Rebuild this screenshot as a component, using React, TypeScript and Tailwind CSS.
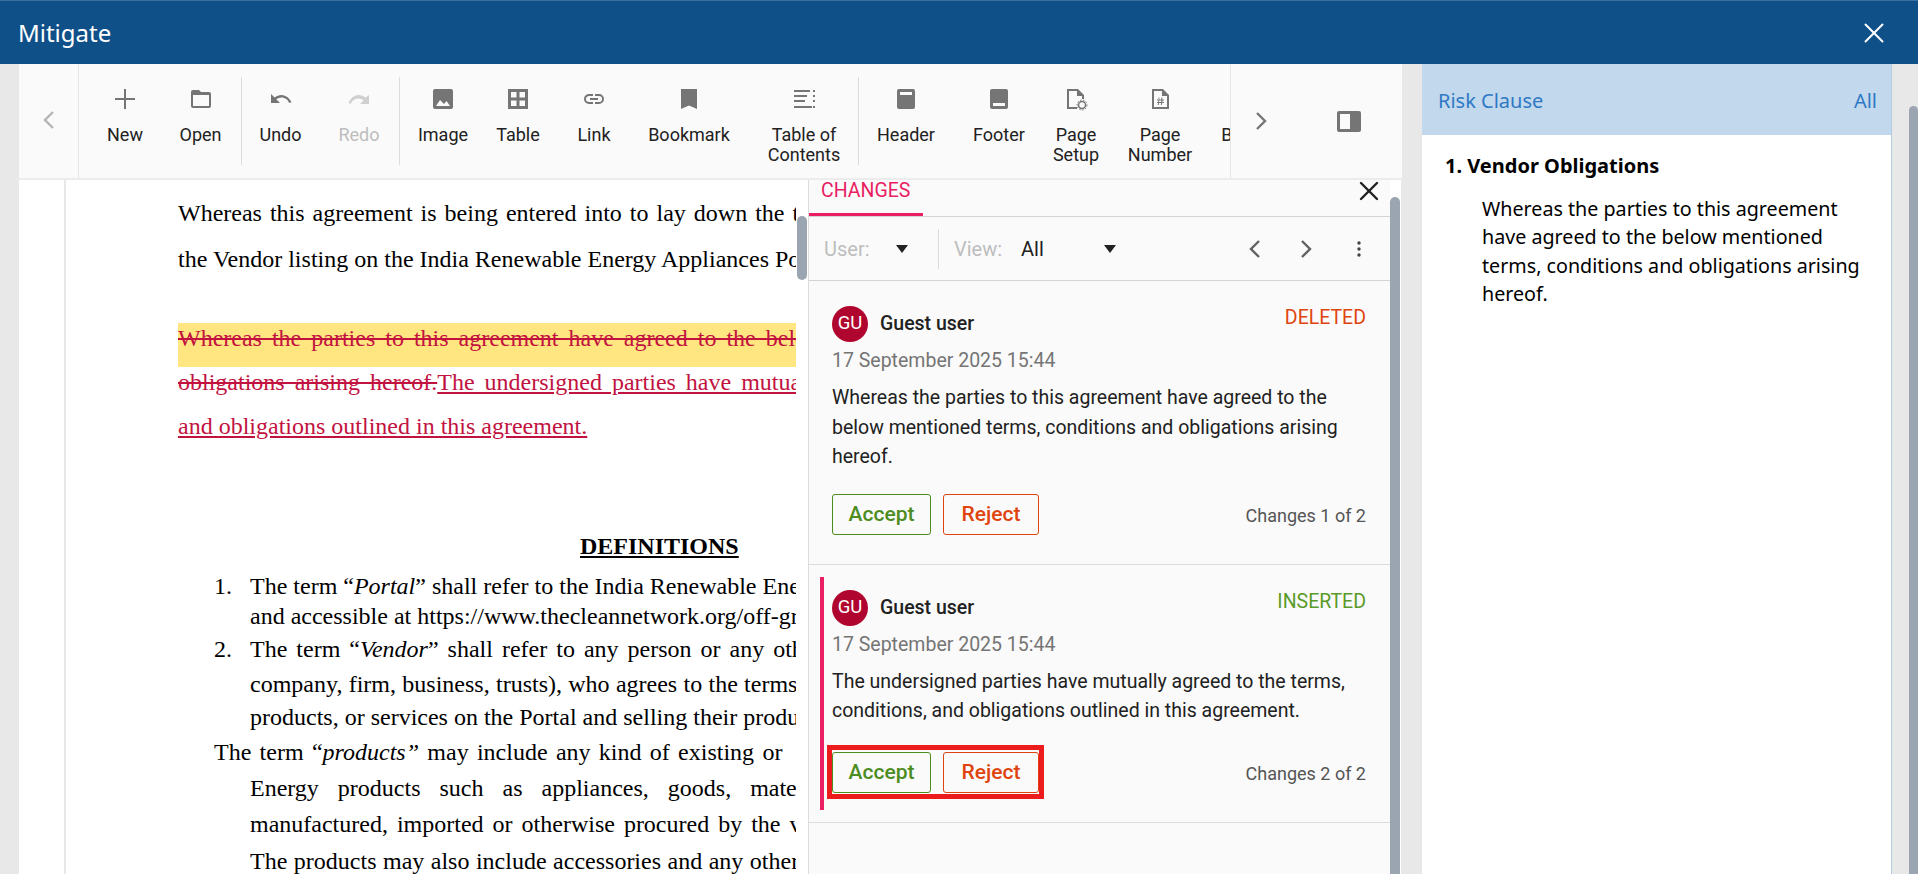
import React from 'react';
import { X } from 'lucide-react';

const roboto = "font-['Roboto',sans-serif]";

// toolbar glyphs, all on a 24 box
const icons: Record<string, React.ReactNode> = {
  plus: <path d="M11 2h2v9h9v2h-9v9h-2v-9H2v-2h9z" />,
  folder: <path fillRule="evenodd" d="M4 3h6l2 2h8a2 2 0 0 1 2 2v12a2 2 0 0 1-2 2H4a2 2 0 0 1-2-2V5a2 2 0 0 1 2-2zm0 5v11h16V8z" />,
  undo: <path d="M12.5 8c-2.6 0-5 1-6.9 2.6L2 7v9h9l-3.6-3.6c1.4-1.2 3.2-1.9 5.1-1.9 3.5 0 6.5 2.3 7.6 5.5l2.4-.8C21 11.9 17.100 8 12.500 8z" />,
  redo: <path d="M18.400 10.600C16.500 9 14.100 8 11.500 8 6.900 8 3 11.900 1.500 16l2.400.8C5 13.600 8 11.500 11.500 11.500c1.900 0 3.700.7 5.100 1.900L13 17h9V8z" />,
  image: <path fillRule="evenodd" d="M4 2h16a2 2 0 0 1 2 2v16a2 2 0 0 1-2 2H4a2 2 0 0 1-2-2V4a2 2 0 0 1 2-2zm5 11-4 6h14l-3.500-5-2.500 3z" />,
  table: <path fillRule="evenodd" d="M2 2h20v20H2zm3 3v5.500h5.500V5zm8.500 0v5.500H19V5zM5 13.500V19h5.500v-5.500zm8.500 0V19H19v-5.500z" />,
  link: <path d="M3.900 12c0-1.700 1.400-3.100 3.100-3.100h4V7H7a5 5 0 0 0 0 10h4v-1.900H7c-1.700 0-3.100-1.400-3.100-3.100zM8 13h8v-2H8zm9-6h-4v1.900h4a3.100 3.100 0 0 1 0 6.200h-4V17h4a5 5 0 0 0 0-10z" />,
  bookmark: <path d="M4 2h16v20l-8-3.500L4 22z" />,
  toc: <path d="M2 3h16v2H2zm19 0h2v2h-2zM2 8h13v2H2zm19 0h2v2h-2zM2 13h11v2H2zm19 0h2v2h-2zM2 19h18v2H2zm19 0h2v2h-2z" />,
  header: <path fillRule="evenodd" d="M5 2h14a2 2 0 0 1 2 2v16a2 2 0 0 1-2 2H5a2 2 0 0 1-2-2V4a2 2 0 0 1 2-2zm1 3v3h12V5z" />,
  footer: <path fillRule="evenodd" d="M5 2h14a2 2 0 0 1 2 2v16a2 2 0 0 1-2 2H5a2 2 0 0 1-2-2V4a2 2 0 0 1 2-2zm1 14v3h12v-3z" />,
  setup: (
    <>
      <path d="M3 2h11l6 6v4h-2V9h-5V4H5v16h8v2H3z" />
      <circle cx="18" cy="18" r="3.500" fill="none" stroke="currentColor" strokeWidth="1.500" />
      <circle cx="18" cy="18" r="5" fill="none" stroke="currentColor" strokeWidth="1" strokeDasharray="1.500 1.500" />
    </>
  ),
  number: (
    <>
      <path fillRule="evenodd" d="M4 2h11l6 6v14H4zm2 2v16h13V9h-5V4z" />
      <path d="M10.500 10.500h1l-.3 2h2l.3-2h1l-.3 2H16v1h-1.500l-.2 1.500H16v1h-1.900l-.3 2h-1l.3-2h-2l-.3 2h-1l.3-2H9v-1h1.300l.2-1.500H9v-1h1.700zm.8 3-.2 1.500h2l.2-1.500z" />
    </>
  ),
};

function Icon({ name, muted }: { name: string; muted?: boolean }) {
  return (
    <svg viewBox="0 0 24 24" className={`h-6 w-6 ${muted ? 'text-[#d0d0d0]' : 'text-[#757575]'}`} fill="currentColor">
      {icons[name]}
    </svg>
  );
}

function ToolItem({ icon, label, className, muted }: { icon?: string; label: React.ReactNode; className: string; muted?: boolean }) {
  return (
    <div className={`flex shrink-0 flex-col items-center pt-[23px] ${className}`}>
      <div className="flex h-6 items-center justify-center">{icon && <Icon name={icon} muted={muted} />}</div>
      <div className={`mt-[14px] text-center text-[18px] leading-[20px] ${muted ? 'text-[#bdbdbd]' : 'text-[#212121]'}`}>{label}</div>
    </div>
  );
}

function ToolSep({ className = '' }: { className?: string }) {
  return <div className={`my-[13px] w-px shrink-0 bg-[#dcdcdc] ${className}`} />;
}

function Chevron({ dir, className }: { dir: 'left' | 'right'; className: string }) {
  return (
    <svg viewBox="0 0 12 20" className={className} fill="none" stroke="currentColor" strokeWidth="2.400">
      <path d={dir === 'left' ? 'M10 2 2 10l8 8' : 'M2 2l8 8-8 8'} />
    </svg>
  );
}

function Toolbar() {
  return (
    <div className={`flex h-[116px] shrink-0 border-b-2 border-[#ececec] bg-[#fafafa] ${roboto}`}>
      <div className="flex w-[60px] shrink-0 items-center justify-center border-r border-[#e6e6e6]">
        <Chevron dir="left" className="mt-[-2px] h-[20px] w-[12px] text-[#b5b5b5]" />
      </div>
      <div className="flex w-[1151px] shrink-0 overflow-hidden pl-[8px]">
        <ToolItem icon="plus" label="New" className="w-[76px]" />
        <ToolItem icon="folder" label="Open" className="w-[75px]" />
        <ToolSep className="ml-[3px]" />
        <ToolItem icon="undo" label="Undo" className="w-[77px]" />
        <ToolItem icon="redo" label="Redo" className="w-[80px]" muted />
        <ToolSep />
        <ToolItem icon="image" label="Image" className="w-[86px]" />
        <ToolItem icon="table" label="Table" className="w-[64px]" />
        <ToolItem icon="link" label="Link" className="w-[88px]" />
        <ToolItem icon="bookmark" label="Bookmark" className="w-[102px]" />
        <ToolItem icon="toc" label={<>Table of<br />Contents</>} className="ml-[10px] w-[108px]" />
        <ToolSep />
        <ToolItem icon="header" label="Header" className="w-[94px]" />
        <ToolItem icon="footer" label="Footer" className="w-[92px]" />
        <ToolItem icon="setup" label={<>Page<br />Setup</>} className="w-[62px]" />
        <ToolItem icon="number" label={<>Page<br />Number</>} className="w-[106px]" />
        <ToolItem label="Break" className="w-[62px]" />
      </div>
      <div className="flex flex-1 border-l border-[#e6e6e6]">
        <Chevron dir="right" className="mt-[47px] ml-[24px] h-[20px] w-[12px] text-[#757575]" />
        <svg viewBox="0 0 24 21" className="mt-[47px] ml-[70px] h-[21px] w-[24px] text-[#757575]" fill="currentColor">
          <path fillRule="evenodd" d="M2 0h20a2 2 0 0 1 2 2v17a2 2 0 0 1-2 2H2a2 2 0 0 1-2-2V2a2 2 0 0 1 2-2zm1 3v15h10V3z" />
        </svg>
      </div>
    </div>
  );
}

function DocLine({ className = '', children }: { className?: string; children: React.ReactNode }) {
  return <div className={`whitespace-nowrap leading-[30px] ${className}`}>{children}</div>;
}

function Document() {
  return (
    <div className="flex w-[789px] shrink-0 bg-white">
      <div className="w-[777px] shrink-0 overflow-hidden pl-[45px]">
        <div className="h-full border-l-2 border-[#e8e8e8] pt-[18px] pl-[112px] font-['Liberation_Serif',serif] text-[24px] text-black">
          <DocLine className="h-[46px] [word-spacing:2px]">Whereas this agreement is being entered into to lay down the terms</DocLine>
          <DocLine className="h-[79px]">the Vendor listing on the India Renewable Energy Appliances Portal</DocLine>
          <DocLine className="h-[44px] bg-[#ffe680] text-[#c2123f] line-through [word-spacing:4px]">Whereas the parties to this agreement have agreed to the below mentioned terms</DocLine>
          <DocLine className="h-[44px] text-[#c2123f] [word-spacing:4px]">
            <span className="line-through">obligations arising hereof.</span>
            <span className="underline">The undersigned parties have mutually agreed</span>
          </DocLine>
          <DocLine className="h-[120px] text-[#c2123f] underline">and obligations outlined in this agreement.</DocLine>
          <DocLine className="h-[24px] pl-[402px] font-bold underline">DEFINITIONS</DocLine>
          <DocLine className="mt-[16px] h-[30px] pl-[36px]">
            <span className="inline-block w-[36px]">1.</span>The term “<em>Portal</em>” shall refer to the India Renewable Energy
          </DocLine>
          <DocLine className="h-[33px] pl-[72px]">and accessible at https://www.thecleannetwork.org/off-grid</DocLine>
          <DocLine className="h-[35px] pl-[36px] [word-spacing:3px]">
            <span className="inline-block w-[36px] [word-spacing:0px]">2.</span>The term “<em>Vendor</em>” shall refer to any person or any other
          </DocLine>
          <DocLine className="h-[33px] pl-[72px] [word-spacing:0.300px]">company, firm, business, trusts), who agrees to the terms</DocLine>
          <DocLine className="h-[35px] pl-[72px]">products, or services on the Portal and selling their products</DocLine>
          <DocLine className="h-[36px] pl-[36px] [word-spacing:2.300px]">The term “<em>products”</em> may include any kind of existing or</DocLine>
          <DocLine className="h-[36px] pl-[72px] [word-spacing:13px]">Energy products such as appliances, goods, materials</DocLine>
          <DocLine className="h-[37px] pl-[72px] [word-spacing:3px]">manufactured, imported or otherwise procured by the vendor</DocLine>
          <DocLine className="pl-[72px] [word-spacing:0.500px]">The products may also include accessories and any other</DocLine>
        </div>
      </div>
      <div className="ml-px w-[10px] shrink-0 pt-[36px]">
        <div className="h-[64px] rounded-full bg-[#9aa5b1]" />
      </div>
    </div>
  );
}

function Caret() {
  return (
    <svg viewBox="0 0 12 8" className="h-2 w-3 text-[#212121]" fill="currentColor">
      <path d="M0 0h12L6 8z" />
    </svg>
  );
}

function ChangeCard({ kind, kindClass, text, count, active }: { kind: string; kindClass: string; text: string[]; count: string; active?: boolean }) {
  return (
    <div className={`border-b border-[#dcdcdc] pr-[24px] ${active ? 'pt-[12px] pb-[12px] pl-[11px]' : 'pt-[25px] pb-[29px] pl-[23px]'}`}>
      <div className={active ? 'relative border-l-4 border-[#e91e63] pt-[13px] pb-[17px] pl-[8px]' : ''}>
        <div className="flex items-start justify-between">
          <div className="flex items-center">
            <div className="flex h-9 w-9 items-center justify-center rounded-full bg-[#b0052e] text-[18.500px] text-white">GU</div>
            <div className="ml-[12px] text-[19.500px] font-medium text-[#212121]">Guest user</div>
          </div>
          <div className={`text-[19.500px] leading-[24px] ${kindClass}`}>{kind}</div>
        </div>
        <div className="mt-[7px] text-[19.500px] leading-[24px] text-[#757575]">17 September 2025 15:44</div>
        <div className="mt-[10px] text-[19.500px] leading-[29.500px] text-[#212121]">
          {text.map((t) => (
            <div key={t}>{t}</div>
          ))}
        </div>
        <div className={`relative flex items-center justify-between ${active ? 'mt-[26px]' : 'mt-[22px]'}`}>
          <div className="flex gap-3">
            <button className="h-[41px] w-[99px] rounded-[3px] border border-[#4d8c1e] pt-[2px] text-[21px] font-medium text-[#4d8c1e]">Accept</button>
            <button className="h-[41px] w-[96px] rounded-[3px] border border-[#e0440e] pt-[2px] text-[21px] font-medium text-[#e0440e]">Reject</button>
          </div>
          <div className="pt-[2px] text-[18px] text-[#555555]">{count}</div>
          {active && <div className="absolute top-[-7px] left-[-5px] h-[54px] w-[217px] border-[5px] border-[#ec1c1c]" />}
        </div>
      </div>
    </div>
  );
}

function ChangesPane() {
  return (
    <div className={`flex w-[593px] shrink-0 bg-white ${roboto}`}>
      <div className="w-[582px] shrink-0 border-l border-[#dcdcdc] bg-[#fafafa]">
        <div className="flex h-[37px] justify-between border-b border-[#d4d4d4] pr-[5px]">
          <div className="h-[36px] w-[114px] border-b-[3px] border-[#e91e63] pt-[1px] pl-[12px] text-[19.500px] leading-[20px] text-[#e91e63]">CHANGES</div>
          <X className="mt-[-5px] h-[32px] w-[32px] text-[#212121]" strokeWidth={1.8} />
        </div>
        <div className="flex h-[64px] items-center border-b border-[#d4d4d4] text-[20px] text-[#bdbdbd]">
          <span className="ml-[15px] w-[72px]">User:</span>
          <Caret />
          <div className="mx-[30px] h-[40px] w-px bg-[#dcdcdc]" />
          <span className="ml-[-15px] w-[67px]">View:</span>
          <span className="w-[83px] text-[#212121]">All</span>
          <Caret />
          <Chevron dir="left" className="ml-[133px] h-[20px] w-[12px] text-[#616161]" />
          <Chevron dir="right" className="ml-[39px] h-[20px] w-[12px] text-[#616161]" />
          <svg viewBox="0 0 4 16" className="ml-[45px] h-[16px] w-[4px] text-[#424242]" fill="currentColor">
            <circle cx="2" cy="2" r="1.700" />
            <circle cx="2" cy="8" r="1.700" />
            <circle cx="2" cy="14" r="1.700" />
          </svg>
        </div>
        <ChangeCard
          kind="DELETED"
          kindClass="text-[#e0440e]"
          text={['Whereas the parties to this agreement have agreed to the', 'below mentioned terms, conditions and obligations arising', 'hereof.']}
          count="Changes 1 of 2"
        />
        <ChangeCard
          active
          kind="INSERTED"
          kindClass="text-[#5a9a28]"
          text={['The undersigned parties have mutually agreed to the terms,', 'conditions, and obligations outlined in this agreement.']}
          count="Changes 2 of 2"
        />
      </div>
      <div className="w-[10px] shrink-0 pt-[17px]">
        <div className="h-full rounded-t-full bg-[#9aa5b1]" />
      </div>
    </div>
  );
}

function RiskPanel() {
  return (
    <div className="w-[470px] shrink-0 border-r border-[#b4cce3] bg-white font-['Noto_Sans',sans-serif] text-black">
      <div className="flex h-[71px] items-center justify-between bg-[#c2d8ed] pt-[2px] pr-[14px] pl-[16px] text-[20px] text-[#2f78c4]">
        <span>Risk Clause</span>
        <span>All</span>
      </div>
      <div className="pt-[17px] pl-[23px] text-[20px] font-bold leading-[28px]">1. Vendor Obligations</div>
      <div className="mt-[15px] pl-[60px] text-[19.700px] leading-[28.300px]">
        Whereas the parties to this agreement
        <br />
        have agreed to the below mentioned
        <br />
        terms, conditions and obligations arising
        <br />
        hereof.
      </div>
    </div>
  );
}

export default function App() {
  return (
    <div className="flex h-[874px] w-[1918px] flex-col overflow-hidden bg-[#e8e8e8]">
      <div className="flex h-16 shrink-0 items-center justify-between border-t border-[#3a70a0] bg-[#0f5089] pr-[27px] pl-[18px] text-white">
        <span className="font-['Noto_Sans',sans-serif] text-[24px]">Mitigate</span>
        <X className="h-[34px] w-[34px]" strokeWidth={1.4} />
      </div>
      <div className="flex min-h-0 flex-1">
        <div className="w-[19px] shrink-0" />
        <div className="flex w-[1383px] shrink-0 flex-col">
          <Toolbar />
          <div className="flex min-h-0 flex-1">
            <Document />
            <ChangesPane />
          </div>
        </div>
        <div className="w-[20px] shrink-0" />
        <RiskPanel />
        <div className="w-[17px] shrink-0" />
        <div className="w-[9px] shrink-0 pt-[42px]">
          <div className="h-full rounded-t-full bg-[#9aa5b1]" />
        </div>
      </div>
    </div>
  );
}
